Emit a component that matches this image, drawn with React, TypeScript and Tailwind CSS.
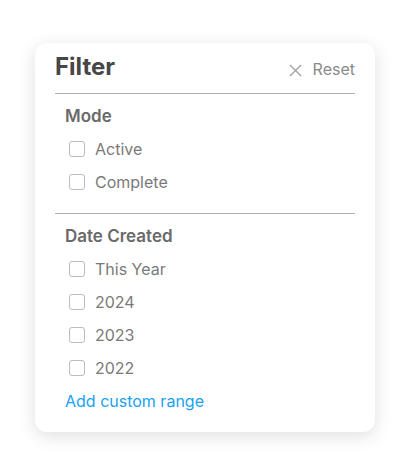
import { useState } from 'react';

type Option = { id: string; label: string };

const modeOptions: Option[] = [
  { id: 'active', label: 'Active' },
  { id: 'complete', label: 'Complete' },
];

const dateOptions: Option[] = [
  { id: 'this-year', label: 'This Year' },
  { id: '2024', label: '2024' },
  { id: '2023', label: '2023' },
  { id: '2022', label: '2022' },
];

function CheckRow({
  option,
  checked,
  onToggle,
}: {
  option: Option;
  checked: boolean;
  onToggle: () => void;
}) {
  return (
    <label className="ml-[4px] flex h-[33px] cursor-pointer items-center gap-[10px]">
      <span
        onClick={onToggle}
        className={`-mt-[2px] flex h-[16px] w-[16px] items-center justify-center rounded-[3px] border-[1.5px] ${
          checked ? 'border-[#1ba1f2] bg-[#1ba1f2]' : 'border-[#bcbcbc] bg-white'
        }`}
      >
        {checked && (
          <svg viewBox="0 0 12 12" className="h-[10px] w-[10px]" fill="none" stroke="white" strokeWidth="2">
            <path d="M2.5 6.2l2.3 2.3 4.7-5" />
          </svg>
        )}
      </span>
      <span className="text-[16px] leading-[33px] text-[#7a7a7a]">{option.label}</span>
    </label>
  );
}

export default function App() {
  const [selected, setSelected] = useState<string[]>([]);

  const toggle = (id: string) =>
    setSelected((prev) => (prev.includes(id) ? prev.filter((x) => x !== id) : [...prev, id]));

  return (
    <div className="min-h-screen bg-white pt-[43px] pl-[35px] font-['Inter',sans-serif]">
      <div className="w-[340px] rounded-[12px] bg-white px-[20px] pt-[8px] pb-[14px] shadow-[0_4px_18px_rgba(0,0,0,0.13)]">
        <div className="flex items-baseline justify-between">
          <h2 className="text-[24px] font-bold leading-[32px] text-[#474747]">Filter</h2>
          <button
            onClick={() => setSelected([])}
            className="flex items-baseline gap-[11px] text-[16px] leading-[32px] text-[#8a8a8a]"
          >
            <svg
              viewBox="0 0 14 14"
              className="h-[13px] w-[13px] translate-y-[1px] self-center"
              fill="none"
              stroke="#a0a0a0"
              strokeWidth="1.4"
            >
              <path d="M1 1l12 12M13 1L1 13" />
            </svg>
            Reset
          </button>
        </div>

        <div className="mt-[8px] h-px bg-[#b0b0b0]" />

        <div className="pl-[10px]">
          <h3 className="mt-[10px] text-[17px] font-semibold leading-[24px] text-[#6a6a6a]">Mode</h3>
          <div className="mt-[5px]">
            {modeOptions.map((o) => (
              <CheckRow key={o.id} option={o} checked={selected.includes(o.id)} onToggle={() => toggle(o.id)} />
            ))}
          </div>
        </div>

        <div className="mt-[14px] h-px bg-[#b0b0b0]" />

        <div className="pl-[10px]">
          <h3 className="mt-[10px] text-[17px] font-semibold leading-[24px] text-[#6a6a6a]">Date Created</h3>
          <div className="mt-[5px]">
            {dateOptions.map((o) => (
              <CheckRow key={o.id} option={o} checked={selected.includes(o.id)} onToggle={() => toggle(o.id)} />
            ))}
          </div>
          <button className="block text-[16px] leading-[33px] text-[#1ba1f2]">Add custom range</button>
        </div>
      </div>
    </div>
  );
}
